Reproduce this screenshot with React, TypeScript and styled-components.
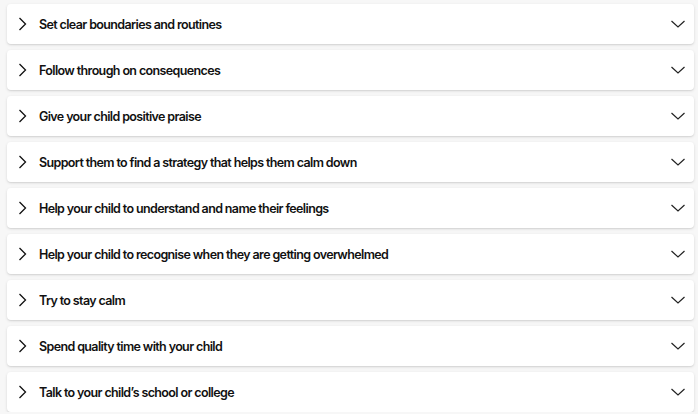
import React from "react";
import styled, { createGlobalStyle } from "styled-components";

const Global = createGlobalStyle`
  html, body { margin: 0; padding: 0; background: #f7f7f7; }
  body { font-family: Inter, "Noto Sans", sans-serif; color: #111; }
`;

const List = styled.div`
  display: flex;
  flex-direction: column;
  gap: 6px;
  padding: 4px 4px 0 7px;
`;

const Card = styled.div`
  height: 40px;
  background: #fff;
  border-radius: 4px;
  box-shadow: 0 1px 3px rgba(0, 0, 0, 0.12), 0 1px 1px rgba(0, 0, 0, 0.05);
  display: flex;
  align-items: center;
  padding: 0 8px 0 11px;
  box-sizing: border-box;
`;

const Title = styled.span`
  flex: 1;
  margin-left: 6px;
  font-size: 12.5px;
  font-weight: 600;
  letter-spacing: -0.63px;
  color: #111;
`;

const Icon = styled.svg`
  display: block;
  flex: none;
`;

const items = [
  "Set clear boundaries and routines",
  "Follow through on consequences",
  "Give your child positive praise",
  "Support them to find a strategy that helps them calm down",
  "Help your child to understand and name their feelings",
  "Help your child to recognise when they are getting overwhelmed",
  "Try to stay calm",
  "Spend quality time with your child",
  "Talk to your child\u2019s school or college",
];

export default function App() {
  return (
    <>
      <Global />
      <List>
        {items.map((t) => (
          <Card key={t}>
            <Icon width="15" height="16" viewBox="0 0 15 16">
              <path d="M1.5 2 L7.5 8 L1.5 14" fill="none" stroke="#111" strokeWidth="1.3" />
            </Icon>
            <Title>{t}</Title>
            <Icon width="16" height="16" viewBox="0 0 16 16">
              <path d="M1.5 5 L8 11 L14.5 5" fill="none" stroke="#222" strokeWidth="1.2" />
            </Icon>
          </Card>
        ))}
      </List>
    </>
  );
}
